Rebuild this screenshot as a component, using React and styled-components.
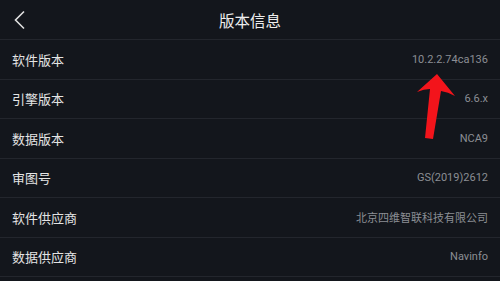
import React from "react";
import styled, { createGlobalStyle } from "styled-components";

const GlobalStyle = createGlobalStyle`
  html, body {
    margin: 0;
    padding: 0;
    background: #13161c;
  }
  body {
    font-family: Roboto, "Noto Sans CJK SC", sans-serif;
  }
`;

const Screen = styled.div`
  position: relative;
  width: 500px;
  height: 281px;
  overflow: hidden;
  background: #13161c;
`;

const Header = styled.div`
  height: 39px;
  border-bottom: 1px solid #23262d;
  display: flex;
  align-items: center;
  justify-content: center;
  position: relative;
`;

const BackButton = styled.div`
  position: absolute;
  left: 10px;
  top: 7px;
  width: 20px;
  height: 26px;
  display: flex;
  align-items: center;
  justify-content: center;
`;

const Title = styled.h1`
  margin: 0;
  font-size: 15.5px;
  font-weight: 400;
  color: #eeeeee;
  font-family: "Noto Sans CJK SC", sans-serif;
`;

const Row = styled.div`
  height: 38.5px;
  border-bottom: 1px solid #23262d;
  display: flex;
  align-items: center;
  justify-content: space-between;
  padding: 0 12px;
`;

const Label = styled.span`
  font-size: 13px;
  color: #e4e4e4;
  font-family: "Noto Sans CJK SC", sans-serif;
`;

const Value = styled.span`
  font-size: 11px;
  color: #8b8e94;
  font-family: Roboto, "Noto Sans CJK SC", sans-serif;
`;

const Annotation = styled.svg`
  position: absolute;
  left: 0;
  top: 0;
  pointer-events: none;
`;

const rows = [
  ["软件版本", "10.2.2.74ca136"],
  ["引擎版本", "6.6.x"],
  ["数据版本", "NCA9"],
  ["审图号", "GS(2019)2612"],
  ["软件供应商", "北京四维智联科技有限公司"],
  ["数据供应商", "Navinfo"],
];

export default function App() {
  return (
    <>
      <GlobalStyle />
      <Screen>
        <Header>
          <BackButton>
            <svg width="12" height="20" viewBox="0 0 12 20">
              <path d="M10 1.5 L1.5 10 L10 18.5" fill="none" stroke="#e0e0e0" strokeWidth="1.6" />
            </svg>
          </BackButton>
          <Title>版本信息</Title>
        </Header>
        {rows.map(([label, value]) => (
          <Row key={label}>
            <Label>{label}</Label>
            <Value>{value}</Value>
          </Row>
        ))}
        <Annotation width="500" height="281" viewBox="0 0 500 281">
          <path
            d="M437 74 L417 92 Q424 89 430 89 L425 138 L433 139 L441 91 Q448 92 455 96 Z"
            fill="#f3141b"
          />
        </Annotation>
      </Screen>
    </>
  );
}
